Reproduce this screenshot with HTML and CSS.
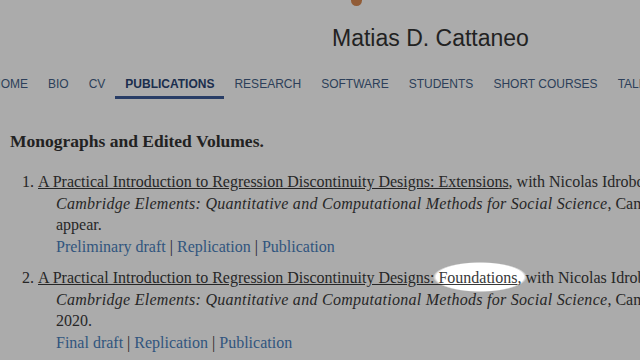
FILE: index.html
```html
<!DOCTYPE html>
<html lang="en">
<head>
<meta charset="utf-8">
<title>Matias D. Cattaneo - Publications</title>
<link rel="stylesheet" href="styles.css">
</head>
<body>
<header class="site-header">
  <div class="brand-mark"></div>
  <h1 class="site-title">Matias D. Cattaneo</h1>
</header>
<nav class="main-nav">
  <ul class="nav-list">
    <li class="nav-item">HOME</li>
    <li class="nav-item">BIO</li>
    <li class="nav-item">CV</li>
    <li class="nav-item active">PUBLICATIONS</li>
    <li class="nav-item">RESEARCH</li>
    <li class="nav-item">SOFTWARE</li>
    <li class="nav-item">STUDENTS</li>
    <li class="nav-item">SHORT COURSES</li>
    <li class="nav-item">TALKS</li>
  </ul>
</nav>
<main class="content">
  <h2 class="section-title">Monographs and Edited Volumes.</h2>
  <ol class="pub-list">
    <li class="pub">
      <a class="pub-title" href="#">A Practical Introduction to Regression Discontinuity Designs: Extensions</a>, with Nicolas Idrobo and Rocío Titiunik.
      <div class="pub-detail">
        <em>Cambridge Elements: Quantitative and Computational Methods for Social Science</em>, Cambridge University Press, to<br>appear.
        <div class="pub-links"><a href="#">Preliminary draft</a> | <a href="#">Replication</a> | <a href="#">Publication</a></div>
      </div>
    </li>
    <li class="pub">
      <a class="pub-title" href="#">A Practical Introduction to Regression Discontinuity Designs: Foundations</a>, with Nicolas Idrobo and Rocío Titiunik.
      <div class="pub-detail">
        <em>Cambridge Elements: Quantitative and Computational Methods for Social Science</em>, Cambridge University Press,<br>2020.
        <div class="pub-links"><a href="#">Final draft</a> | <a href="#">Replication</a> | <a href="#">Publication</a></div>
      </div>
    </li>
  </ol>
</main>
<div class="spotlight"></div>
</body>
</html>
```
FILE: styles.css
```css
html, body {
  margin: 0;
  padding: 0;
}
body {
  background: #ffffff;
  overflow: hidden;
  width: 640px;
  height: 360px;
}
.site-header {
  font-family: "Liberation Sans", Arial, sans-serif;
}
.brand-mark {
  width: 11px;
  height: 6px;
  margin-left: 351px;
  background: #d98a52;
  border-radius: 0 0 6px 6px;
}
.site-title {
  margin: 19px 0 0 332px;
  font-size: 23px;
  line-height: 26px;
  font-weight: normal;
  color: #343434;
  white-space: nowrap;
}
.main-nav {
  font-family: "Liberation Sans", Arial, sans-serif;
}
.nav-list {
  list-style: none;
  display: flex;
  margin: 26px 0 0 -18px;
  padding: 0;
  white-space: nowrap;
}
.nav-item {
  padding: 0 10px 5px;
  font-size: 12px;
  line-height: 14px;
  color: #435f86;
  border-bottom: 3px solid transparent;
}
.nav-item.active {
  font-weight: bold;
  color: #2b4574;
  border-bottom-color: #3d5c98;
}
.content {
  font-family: "Liberation Serif", "Times New Roman", serif;
  color: #3a3a3a;
  white-space: nowrap;
}
.section-title {
  margin: 32px 0 0 10px;
  font-size: 17.5px;
  line-height: 20px;
  font-weight: bold;
  color: #333;
}
.pub-list {
  margin: 20px 0 0 38px;
  padding: 0;
  font-size: 16px;
  line-height: 21.5px;
}
.pub {
  margin-bottom: 10px;
}
.pub-title {
  color: #3a3a3a;
  text-decoration: underline;
}
.pub-detail {
  margin-left: 18px;
}
.pub-detail em {
  letter-spacing: 0.27px;
}
.pub-links a {
  color: #4a7fbd;
  text-decoration: none;
}
.spotlight {
  position: fixed;
  inset: 0;
  pointer-events: none;
  background: radial-gradient(ellipse 47px 15px at 480px 277px, rgba(0,0,0,0) 93%, rgba(0,0,0,0.33) 100%);
}
```
